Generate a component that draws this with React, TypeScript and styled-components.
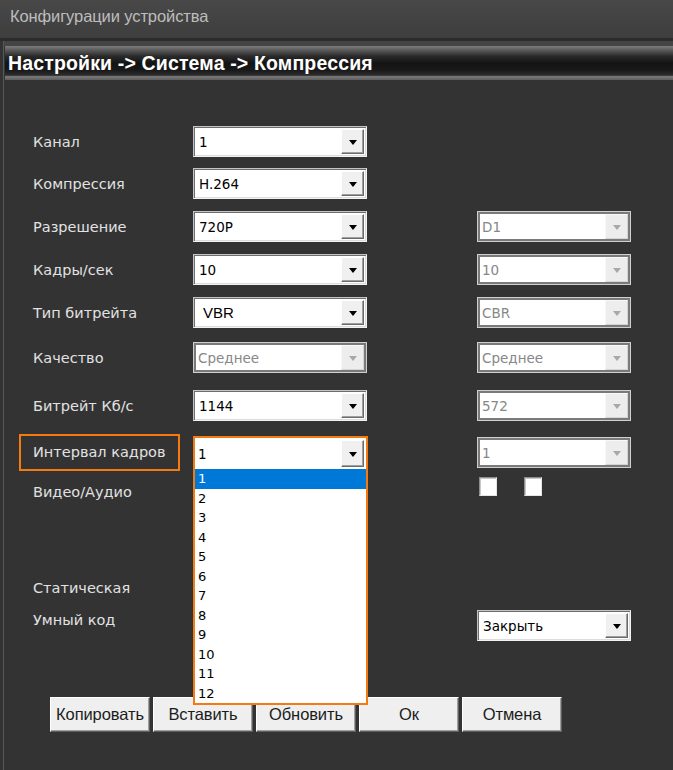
import React from 'react';
import styled, { createGlobalStyle, css } from 'styled-components';

const GlobalStyle = createGlobalStyle`
  *, *::before, *::after { box-sizing: border-box; }
  html, body { margin: 0; padding: 0; background: #333333; }
  body { font-family: "DejaVu Sans", sans-serif; }
`;

const ORANGE = '#f47a12';

const Window = styled.div`
  width: 673px;
  height: 770px;
  overflow: hidden;
  background: #333333;
  display: flex;
  flex-direction: column;
`;

const TitleBar = styled.div`
  height: 41px;
  flex: none;
  display: flex;
  align-items: center;
  padding: 0 0 6px 10px;
  background: linear-gradient(#484848, #3e3e3e);
  border-bottom: 3px solid #2c2c2c;
  color: #bdbdbd;
  font: 16.5px "Liberation Sans", Arial, sans-serif;
  letter-spacing: -0.1px;
`;

const Panel = styled.div`
  flex: 1;
  margin-left: 3px;
  border-left: 1px solid #575757;
  padding-top: 5px;
  background: linear-gradient(#444444 0, #444444 5px, #333333 5px);
`;

const SectionHeader = styled.div`
  height: 34px;
  margin-left: 1px;
  padding-left: 3px;
  display: flex;
  align-items: center;
  color: #ffffff;
  font: bold 19.5px "Liberation Sans", Arial, sans-serif;
  letter-spacing: 0.15px;
  background: linear-gradient(
    #7c7c7c 0%,
    #606060 10%,
    #2a2a2a 30%,
    #141414 50%,
    #181818 70%,
    #2c2c2c 86%,
    #7a7a7a 90%,
    #5c5c5c 100%
  );
`;

const Form = styled.div`
  padding: 45px 0 0 29px;
`;

const Row = styled.div<{ $gap?: number; $h?: number; $align?: string }>`
  display: grid;
  grid-template-columns: 160px 174px 110px 154px;
  height: ${(p) => p.$h ?? 31}px;
  margin-bottom: ${(p) => p.$gap ?? 0}px;
  align-items: ${(p) => p.$align ?? 'center'};
`;

const Label = styled.div<{ $lh?: number; $pt?: number }>`
  align-self: start;
  padding-top: ${(p) => p.$pt ?? 0}px;
  color: #e2e2e2;
  font-size: 14.5px;
  line-height: ${(p) => p.$lh ?? 31}px;
  white-space: nowrap;
`;

const HighlightLabel = styled(Label)`
  align-self: center;
  margin-left: -14px;
  width: 161px;
  height: 37px;
  line-height: 33px;
  padding-left: 12px;
  border: 2px solid ${ORANGE};
`;

const Combo = styled.div<{ $disabled?: boolean }>`
  position: relative;
  width: 100%;
  height: 31px;
  display: flex;
  align-items: center;
  padding-left: 5px;
  background: #ffffff;
  ${(p) =>
    p.$disabled
      ? css`
          border: 1px solid #cfcfcf;
          box-shadow: inset 0 0 0 2px #7a7a7a;
          padding-left: 4px;
        `
      : css`
          border: 1px solid;
          border-color: #c4c4c4 #f2f2f2 #f2f2f2 #c4c4c4;
          box-shadow: inset 1px 1px 0 #6d6d6d, inset -1px -1px 0 #dcdcdc;
        `}
`;

const ComboText = styled.span<{ $disabled?: boolean; $big?: boolean }>`
  flex: 1;
  color: ${(p) => (p.$disabled ? '#878787' : '#000000')};
  font: ${(p) => (p.$big ? '15px "Liberation Sans", Arial, sans-serif' : '13.5px "DejaVu Sans", sans-serif')};
  ${(p) => p.$big && 'padding-left: 4px;'}
  white-space: nowrap;
`;

const ArrowButton = styled.div<{ $disabled?: boolean }>`
  width: 23px;
  align-self: stretch;
  margin: 2px 2px 2px 0;
  display: flex;
  align-items: center;
  justify-content: center;
  background: ${(p) => (p.$disabled ? '#ededed' : '#f0f0f0')};
  border: 1px solid;
  border-color: ${(p) => (p.$disabled ? '#f8f8f8 #d4d4d4 #d4d4d4 #f8f8f8' : '#ffffff #6a6a6a #6a6a6a #ffffff')};
  ${(p) => !p.$disabled && 'box-shadow: inset -1px -1px 0 #a0a0a0;'}
`;

const Triangle = styled.span<{ $disabled?: boolean }>`
  width: 0;
  height: 0;
  border-left: 4px solid transparent;
  border-right: 4px solid transparent;
  border-top: 5px solid ${(p) => (p.$disabled ? '#a8a8a8' : '#000000')};
  margin-top: 1px;
`;

const OpenCombo = styled.div`
  position: relative;
  width: 175px;
  height: 33px;
  border: 2px solid ${ORANGE};
  border-bottom: none;
  background: #ffffff;
  display: flex;
  align-items: center;
  padding-left: 3px;
`;

const ListBox = styled.div`
  position: absolute;
  top: 100%;
  left: -2px;
  width: calc(100% + 4px);
  border: 2px solid ${ORANGE};
  border-top: none;
  background: #ffffff;
  z-index: 2;
`;

const ListItem = styled.div<{ $selected?: boolean }>`
  height: 19.5px;
  line-height: 19.5px;
  padding-left: 3px;
  font-size: 13px;
  color: ${(p) => (p.$selected ? '#ffffff' : '#000000')};
  background: ${(p) => (p.$selected ? '#0078d7' : 'transparent')};
`;

const Checks = styled.div`
  grid-column: 4;
  display: flex;
  gap: 27px;
  padding-left: 2px;
`;

const CheckBox = styled.div`
  width: 18px;
  height: 19px;
  background: #ffffff;
  border: 1px solid;
  border-color: #8e8e8e #e4e4e4 #e4e4e4 #8e8e8e;
  box-shadow: inset 1px 1px 0 #c8c8c8;
`;

const ButtonBar = styled.div`
  display: flex;
  gap: 3px;
  padding-left: 46px;
  margin-top: 56px;
`;

const Button = styled.div`
  width: 100px;
  height: 35px;
  display: flex;
  align-items: center;
  justify-content: center;
  background: #efefef;
  border: 1px solid;
  border-color: #ffffff #5e5e5e #5e5e5e #ffffff;
  box-shadow: inset -1px -1px 0 #a0a0a0;
  color: #1c1c1c;
  font: 16.5px "Liberation Sans", Arial, sans-serif;
  letter-spacing: -0.1px;
`;

interface ComboProps {
  value: string;
  disabled?: boolean;
  big?: boolean;
}

const Select: React.FC<ComboProps> = ({ value, disabled, big }) => (
  <Combo $disabled={disabled}>
    <ComboText $disabled={disabled} $big={big}>
      {value}
    </ComboText>
    <ArrowButton $disabled={disabled}>
      <Triangle $disabled={disabled} />
    </ArrowButton>
  </Combo>
);

const rows: { label: string; main: ComboProps; extra?: ComboProps; gap: number }[] = [
  { label: 'Канал', main: { value: '1' }, gap: 11 },
  { label: 'Компрессия', main: { value: 'H.264' }, gap: 12 },
  { label: 'Разрешение', main: { value: '720P' }, extra: { value: 'D1', disabled: true }, gap: 12 },
  { label: 'Кадры/сек', main: { value: '10' }, extra: { value: '10', disabled: true }, gap: 12 },
  { label: 'Тип битрейта', main: { value: 'VBR', big: true }, extra: { value: 'CBR', disabled: true }, gap: 14 },
  {
    label: 'Качество',
    main: { value: 'Среднее', disabled: true },
    extra: { value: 'Среднее', disabled: true },
    gap: 17,
  },
  { label: 'Битрейт Кб/с', main: { value: '1144' }, extra: { value: '572', disabled: true }, gap: 14 },
];

const intervals = Array.from({ length: 12 }, (_, i) => String(i + 1));

const buttons = ['Копировать', 'Вставить', 'Обновить', 'Ок', 'Отмена'];

const App: React.FC = () => (
  <>
    <GlobalStyle />
    <Window>
      <TitleBar>Конфигурации устройства</TitleBar>
      <Panel>
        <SectionHeader>{'Настройки -> Система -> Компрессия'}</SectionHeader>
        <Form>
          {rows.map((r) => (
            <Row key={r.label} $gap={r.gap}>
              <Label $pt={2}>{r.label}</Label>
              <Select {...r.main} />
              <span />
              {r.extra ? <Select {...r.extra} /> : <span />}
            </Row>
          ))}

          <Row $h={33} $gap={10}>
            <HighlightLabel>Интервал кадров</HighlightLabel>
            <OpenCombo>
              <ComboText>1</ComboText>
              <ArrowButton>
                <Triangle />
              </ArrowButton>
              <ListBox>
                {intervals.map((n) => (
                  <ListItem key={n} $selected={n === '1'}>
                    {n}
                  </ListItem>
                ))}
              </ListBox>
            </OpenCombo>
            <span />
            <Select value="1" disabled />
          </Row>

          <Row $gap={65} $align="start">
            <Label>Видео/Аудио</Label>
            <Checks>
              <CheckBox />
              <CheckBox />
            </Checks>
          </Row>

          <Row $gap={6}>
            <Label>Статическая</Label>
          </Row>

          <Row $align="start">
            <Label $lh={20}>Умный код</Label>
            <span />
            <span />
            <Select value="Закрыть" />
          </Row>
        </Form>
        <ButtonBar>
          {buttons.map((b) => (
            <Button key={b}>{b}</Button>
          ))}
        </ButtonBar>
      </Panel>
    </Window>
  </>
);

export default App;
